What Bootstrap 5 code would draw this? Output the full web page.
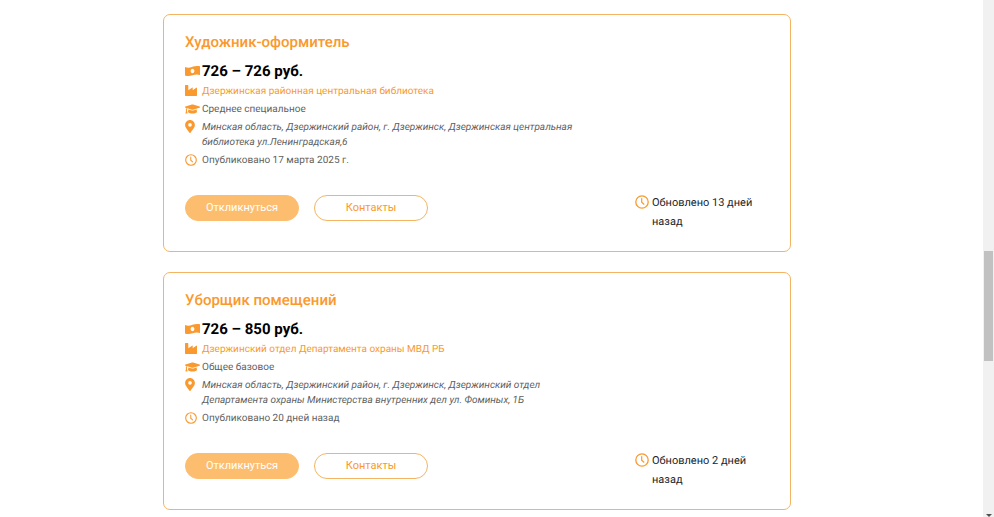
<!DOCTYPE html>
<html lang="ru">
<head>
<meta charset="utf-8">
<meta name="viewport" content="width=device-width, initial-scale=1">
<title>Вакансии</title>
<link href="https://cdn.jsdelivr.net/npm/bootstrap@5.3.0/dist/css/bootstrap.min.css" rel="stylesheet">
<style>
:root { --accent: #f9992e; --soft: #fcbe6e; --line: #f3b562; }
body { font-family: Roboto, "Liberation Sans", sans-serif; font-size: 11px; line-height: 15px; color: #212529; background: #fff; text-rendering: geometricPrecision; }
.vacancies { padding: 14px 16px 7px 163px; }
.vacancy-list { max-width: 628px; gap: 20px; }
.vacancy { border: 1px solid var(--line); border-radius: 7px; padding: 18px 21px 20px; }
.vacancy-title { font-size: 15px; line-height: 18px; font-weight: 500; color: var(--accent); margin: 0 0 10px; }
.vacancy-title a, .org { color: var(--accent); text-decoration: none; }
.salary { font-size: 15px; line-height: 20px; font-weight: 700; color: #000; margin-bottom: 3px; }
.facts { gap: 3px; max-width: 400px; font-size: 10px; color: #5f5f5f; }
.ico { width: 17px; flex: none; display: flex; color: var(--accent); }
.ico svg { display: block; fill: currentColor; }
.pay-ico { align-self: center; }
.facts .ico { height: 13px; align-items: center; }
.actions { margin-top: 25px; gap: 15px; }
.actions .btn { --bs-btn-font-size: 11px; --bs-btn-line-height: 16px; --bs-btn-padding-y: 4px; --bs-btn-padding-x: 0; --bs-btn-border-radius: 13px; width: 114px; margin-top: 2px; }
.btn-apply { --bs-btn-color: #fff; --bs-btn-bg: var(--soft); --bs-btn-border-color: var(--soft); --bs-btn-hover-color: #fff; --bs-btn-hover-bg: var(--accent); }
.btn-contacts { --bs-btn-color: var(--accent); --bs-btn-border-color: var(--line); --bs-btn-hover-color: #fff; --bs-btn-hover-bg: var(--accent); }
.updated { width: 134px; line-height: 19px; padding-right: 16px; }
.updated .ico { height: 18px; align-items: center; }
.scroll-track { width: 11px; background: #f1f1f1; padding: 0 1px; }
.scroll-thumb { height: 110px; margin-top: 251px; background: #c1c1c1; }
.scroll-arrow { border: 3px solid transparent; border-top-color: #505050; border-bottom: 0; }
</style>
<script src="https://cdn.jsdelivr.net/npm/bootstrap@5.3.0/dist/js/bootstrap.bundle.min.js"></script>
</head>
<body>
<svg class="d-none" aria-hidden="true">
  <symbol id="i-money" viewBox="0 0 16 12"><path fill-rule="evenodd" d="M0 1.7C3 3 5.300 2.400 8 1.500S13 .2 16 1v9.300c-3-1.100-5.300-.6-8 .3s-5 1.200-8 .3zM8 3.700c-1.200 0-2 1-2 2.400s.8 2.400 2 2.400 2-1 2-2.400-.8-2.400-2-2.400z"/></symbol>
  <symbol id="i-factory" viewBox="0 0 12 11"><path d="M.5 0h2.300c.3 0 .5.2.5.500v4.800L7 2.700c.4-.2.700 0 .7.400v2.200l3.600-2.600c.4-.2.700 0 .7.400v7.400c0 .3-.2.500-.5.500H.5c-.3 0-.5-.2-.5-.5V.5C0 .2.200 0 .5 0z"/></symbol>
  <symbol id="i-cap" viewBox="0 0 640 512"><path d="M622 153 343 68c-15-5-31-5-46 0L18 153c-24 8-24 40 0 47l49 15c-11 13-17 29-18 47-10 6-17 16-17 28 0 11 6 21 15 26L21 430c-2 9 5 18 14 18h58c9 0 16-9 14-18L81 316c9-5 15-15 15-26s-6-21-15-27c1-14 8-27 20-35l196 60c9 3 27 6 46 0l279-88c24-7 24-39 0-47zM352 319c-28 9-51 4-64 0l-145-45-15 110c0 35 86 64 192 64s192-29 192-64l-15-110z"/></symbol>
  <symbol id="i-pin" viewBox="0 0 384 512"><path fill-rule="evenodd" d="M172 502C27 291 0 270 0 192 0 86 86 0 192 0s192 86 192 192c0 78-27 99-172 310-10 13-30 13-40 0zM192 264a72 72 0 1 0 0-144 72 72 0 0 0 0 144z"/></symbol>
  <symbol id="i-clock" viewBox="0 0 14 14"><circle cx="7" cy="7" r="6.200" fill="none" stroke="currentColor" stroke-width="1.300"/><path d="M6.700 3.500v3.700l2.200 2" fill="none" stroke="currentColor" stroke-width="1.200" stroke-linecap="round"/></symbol>
</svg>
<div class="d-flex vh-100 overflow-hidden">
  <main class="vacancies flex-grow-1 overflow-hidden">
    <div class="vacancy-list d-flex flex-column">
      <article class="vacancy">
        <h2 class="vacancy-title"><a href="#">Художник-оформитель</a></h2>
        <div class="salary d-flex"><span class="ico pay-ico"><svg width="15" height="12"><use href="#i-money"/></svg></span>726 – 726 руб.</div>
        <div class="facts d-flex flex-column">
          <div class="d-flex"><span class="ico"><svg width="12" height="11"><use href="#i-factory"/></svg></span><a class="org" href="#">Дзержинская районная центральная библиотека</a></div>
          <div class="d-flex"><span class="ico"><svg width="15" height="12"><use href="#i-cap"/></svg></span><span>Среднее специальное</span></div>
          <div class="d-flex"><span class="ico"><svg width="10" height="13"><use href="#i-pin"/></svg></span><address class="m-0 fst-italic">Минская область, Дзержинский район, г. Дзержинск, Дзержинская центральная библиотека ул.Ленинградская,6</address></div>
          <div class="d-flex"><span class="ico"><svg width="12" height="12"><use href="#i-clock"/></svg></span><span>Опубликовано 17 марта 2025 г.</span></div>
        </div>
        <div class="actions d-flex align-items-start">
          <button type="button" class="btn btn-apply">Откликнуться</button>
          <button type="button" class="btn btn-contacts">Контакты</button>
          <div class="updated d-flex ms-auto"><span class="ico"><svg width="14" height="14"><use href="#i-clock"/></svg></span><span>Обновлено 13 дней назад</span></div>
        </div>
      </article>
      <article class="vacancy">
        <h2 class="vacancy-title"><a href="#">Уборщик помещений</a></h2>
        <div class="salary d-flex"><span class="ico pay-ico"><svg width="15" height="12"><use href="#i-money"/></svg></span>726 – 850 руб.</div>
        <div class="facts d-flex flex-column">
          <div class="d-flex"><span class="ico"><svg width="12" height="11"><use href="#i-factory"/></svg></span><a class="org" href="#">Дзержинский отдел Департамента охраны МВД РБ</a></div>
          <div class="d-flex"><span class="ico"><svg width="15" height="12"><use href="#i-cap"/></svg></span><span>Общее базовое</span></div>
          <div class="d-flex"><span class="ico"><svg width="10" height="13"><use href="#i-pin"/></svg></span><address class="m-0 fst-italic">Минская область, Дзержинский район, г. Дзержинск, Дзержинский отдел Департамента охраны Министерства внутренних дел ул. Фоминых, 1Б</address></div>
          <div class="d-flex"><span class="ico"><svg width="12" height="12"><use href="#i-clock"/></svg></span><span>Опубликовано 20 дней назад</span></div>
        </div>
        <div class="actions d-flex align-items-start">
          <button type="button" class="btn btn-apply">Откликнуться</button>
          <button type="button" class="btn btn-contacts">Контакты</button>
          <div class="updated d-flex ms-auto"><span class="ico"><svg width="14" height="14"><use href="#i-clock"/></svg></span><span>Обновлено 2 дней назад</span></div>
        </div>
      </article>
    </div>
  </main>
  <div class="scroll-track d-flex flex-column justify-content-between align-items-center flex-shrink-0" aria-hidden="true">
    <div class="scroll-thumb w-100"></div>
    <div class="scroll-arrow"></div>
  </div>
</div>
</body>
</html>
